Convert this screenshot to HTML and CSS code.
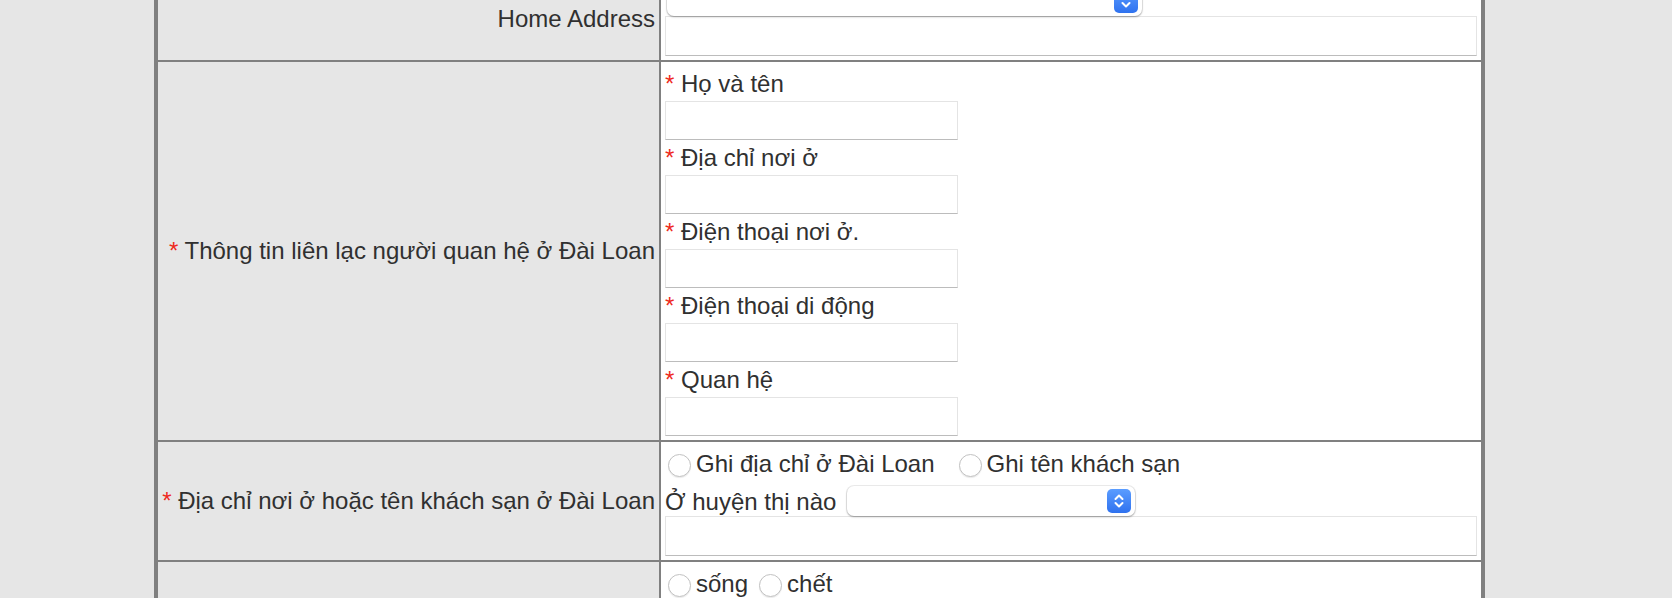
FILE: index.html
```html
<!DOCTYPE html>
<html lang="vi">
<head>
<meta charset="utf-8">
<title>Form</title>
<link rel="stylesheet" href="styles.css">
</head>
<body>
<table class="form">
  <colgroup><col class="c-label"><col class="c-val"></colgroup>
  <tr>
    <th class="lbl">Home Address</th>
    <td class="val">
      <div class="sel-line">
        <div class="select sel-wide">
          <select aria-label="Home Address"></select>
          <span class="sel-btn"><svg width="24" height="24" viewBox="0 0 24 24"><path d="M8.5 10 12 6.5 15.5 10M8.5 14 12 17.5 15.5 14" fill="none" stroke="#fff" stroke-width="2" stroke-linecap="round" stroke-linejoin="round"/></svg></span>
        </div>
      </div>
      <input class="txt wide" type="text">
    </td>
  </tr>
  <tr>
    <th class="lbl"><span class="req">*</span> Thông tin liên lạc người quan hệ ở Đài Loan</th>
    <td class="val">
      <div class="stack">
        <div class="field"><label><span class="req">*</span> Họ và tên</label><input class="txt short" type="text"></div>
        <div class="field"><label><span class="req">*</span> Địa chỉ nơi ở</label><input class="txt short" type="text"></div>
        <div class="field"><label><span class="req">*</span> Điện thoại nơi ở.</label><input class="txt short" type="text"></div>
        <div class="field"><label><span class="req">*</span> Điện thoại di động</label><input class="txt short" type="text"></div>
        <div class="field"><label><span class="req">*</span> Quan hệ</label><input class="txt short" type="text"></div>
      </div>
    </td>
  </tr>
  <tr>
    <th class="lbl"><span class="req">*</span> Địa chỉ nơi ở hoặc tên khách sạn ở Đài Loan</th>
    <td class="val">
      <div class="radio-line">
        <label class="opt opt-wide"><input type="radio" name="addr">Ghi địa chỉ ở Đài Loan</label><label class="opt opt-wide"><input type="radio" name="addr">Ghi tên khách sạn</label>
      </div>
      <div class="sel-line">
        <span class="sel-text">Ở huyện thị nào</span>
        <div class="select sel-mid">
          <select aria-label="Ở huyện thị nào"></select>
          <span class="sel-btn"><svg width="24" height="24" viewBox="0 0 24 24"><path d="M8.5 10 12 6.5 15.5 10M8.5 14 12 17.5 15.5 14" fill="none" stroke="#fff" stroke-width="2" stroke-linecap="round" stroke-linejoin="round"/></svg></span>
        </div>
      </div>
      <input class="txt wide" type="text">
    </td>
  </tr>
  <tr>
    <th class="lbl"></th>
    <td class="val">
      <div class="radio-line">
        <label class="opt opt-narrow"><input type="radio" name="life">sống</label><label class="opt opt-narrow"><input type="radio" name="life">chết</label>
      </div>
      <input class="txt wide gap-top" type="text">
    </td>
  </tr>
</table>
</body>
</html>
```

FILE: styles.css
```css
* { box-sizing: border-box; }

html, body {
  margin: 0;
  background: #e6e6e6;
}

body {
  font-family: "Liberation Sans", Arial, Helvetica, sans-serif;
  font-size: 24px;
  color: #303030;
}

.form {
  margin: -26px 0 0 154px;
  width: 1331px;
  table-layout: fixed;
  border-collapse: separate;
  border-spacing: 0;
  border: 3px solid #808080;
}

.c-label { width: 503px; }
.c-val { width: 822px; }

.form th,
.form td {
  border: 1px solid #808080;
}

.lbl {
  background: #e6e6e6;
  text-align: right;
  font-weight: normal;
  vertical-align: middle;
  padding: 4px;
  line-height: 28px;
}

.val {
  background: #fff;
  vertical-align: top;
  padding: 8px 4px 4px;
  line-height: 28px;
}

.req { color: #ee2a1e; }

.stack {
  display: flex;
  flex-direction: column;
  gap: 4px;
}

.field label {
  display: block;
  line-height: 28px;
}

.field .txt { margin-top: 3px; }

.txt {
  display: block;
  height: 40px;
  border: 1px solid #e4e4e4;
  border-bottom-color: #bcbcbc;
  background: #fff;
  padding: 0 6px;
  font: inherit;
  border-radius: 0;
}

.txt.wide { width: 100%; }
.txt.short { width: 293px; height: 39px; }
.txt.gap-top { margin-top: 8px; }

.radio-line {
  height: 28px;
  line-height: 28px;
  white-space: nowrap;
}

.opt input {
  appearance: none;
  -webkit-appearance: none;
  width: 23px;
  height: 23px;
  margin: 0 5px 0 3px;
  border-radius: 50%;
  border: 1px solid #c2c2c2;
  background: #fff;
  box-shadow: 0 1px 1px rgba(0, 0, 0, 0.08);
  vertical-align: middle;
}

.opt-wide { margin-right: 21px; }
.opt-narrow { margin-right: 8px; }

.sel-line {
  display: flex;
  align-items: center;
  height: 30px;
}

.radio-line + .sel-line { margin-top: 8px; }

.sel-text {
  line-height: 28px;
  padding-top: 1px;
}

.select {
  display: flex;
  align-items: center;
  height: 30px;
  padding-right: 4px;
  border-radius: 7px;
  background: #fff;
  box-shadow: 0 0 0 1px rgba(0, 0, 0, 0.07), 0 1px 2px rgba(0, 0, 0, 0.3);
}

.sel-wide { width: 475px; margin-left: 2px; }
.sel-mid { width: 288px; margin-left: 11px; }

.select select {
  flex: 1;
  height: 100%;
  appearance: none;
  -webkit-appearance: none;
  border: 0;
  background: transparent;
  font: inherit;
}

.sel-btn {
  width: 24px;
  height: 24px;
  border-radius: 5px;
  background: linear-gradient(#5b9dff, #2f72ef);
  display: flex;
  align-items: center;
  justify-content: center;
}

.sel-btn svg { display: block; }
```
